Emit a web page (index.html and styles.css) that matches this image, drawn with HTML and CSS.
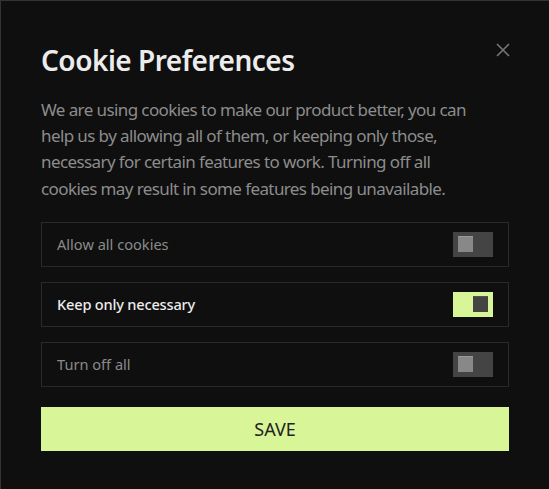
FILE: index.html
```html
<!DOCTYPE html>
<html lang="en">
<head>
<meta charset="utf-8">
<title>Cookie Preferences</title>
<link rel="stylesheet" href="styles.css">
</head>
<body>
<div class="modal">
  <button class="close" aria-label="Close">
    <svg width="14" height="14" viewBox="0 0 14 14"><path d="M1 1 L13 13 M13 1 L1 13" stroke="#747474" stroke-width="1.7" fill="none"/></svg>
  </button>
  <h1 class="title">Cookie Preferences</h1>
  <p class="desc">We are using cookies to make our product better, you can help us by allowing all of them, or keeping only those, necessary for certain features to work. Turning off all cookies may result in some features being unavailable.</p>
  <div class="options">
    <div class="option">
      <span class="label">Allow all cookies</span>
      <span class="toggle"><span class="knob"></span></span>
    </div>
    <div class="option active">
      <span class="label">Keep only necessary</span>
      <span class="toggle"><span class="knob"></span></span>
    </div>
    <div class="option">
      <span class="label">Turn off all</span>
      <span class="toggle"><span class="knob"></span></span>
    </div>
  </div>
  <button class="save">SAVE</button>
</div>
</body>
</html>
```
FILE: styles.css
```css
* { box-sizing: border-box; }
html, body { margin: 0; padding: 0; background: #0f0f0f; }
body { font-family: "Noto Sans", "Open Sans", sans-serif; }
.modal {
  position: relative;
  width: 570px;
  min-height: 510px;
  border: 1px solid #333;
  background: #0f0f0f;
  padding: 39px 60px 40px 40px;
}
.close {
  position: absolute;
  left: 494px;
  top: 41px;
  width: 16px;
  height: 16px;
  padding: 0;
  border: 0;
  background: none;
  display: flex;
  align-items: center;
  justify-content: center;
}
.title {
  margin: 0;
  font-size: 28px;
  line-height: 40px;
  font-weight: 600;
  color: #ececec;
  letter-spacing: -0.5px;
}
.desc {
  margin: 17px 0 0;
  font-size: 17px;
  line-height: 26.2px;
  color: #8c8c8c;
  letter-spacing: -0.6px;
  width: 445px;
}
.options {
  margin-top: 20px;
  display: flex;
  flex-direction: column;
  gap: 15px;
  width: 468px;
}
.option {
  height: 45px;
  border: 1px solid #2a2a2a;
  display: flex;
  align-items: center;
  justify-content: space-between;
  padding: 0 15px 0 15px;
}
.label {
  font-size: 14.6px;
  color: #8a8a8a;
}
.option.active .label { color: #ececec; font-weight: 500; letter-spacing: -0.2px; }
.toggle {
  width: 40px;
  height: 25px;
  background: #444;
  display: flex;
  align-items: center;
  padding: 0 4px 0 5px;
}
.knob {
  width: 15px;
  height: 16px;
  background: #888;
  border-top: 1px solid #999;
}
.option.active .toggle { background: #d8f598; justify-content: flex-end; padding: 0 5px 0 4px; }
.option.active .knob { background: #444; border-top-color: #555; }
.save {
  display: block;
  margin-top: 20px;
  width: 468px;
  height: 44px;
  border: 0;
  background: #d8f598;
  color: #222;
  font-family: inherit;
  font-size: 18px;
  letter-spacing: 0;
}
```
